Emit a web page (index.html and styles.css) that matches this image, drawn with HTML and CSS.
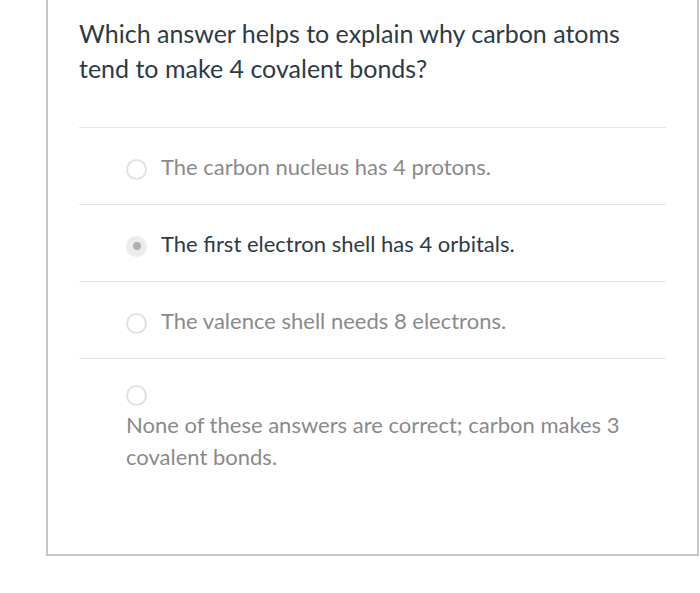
FILE: index.html
```html
<!DOCTYPE html>
<html>
<head>
<meta charset="utf-8">
<link rel="stylesheet" href="styles.css">
</head>
<body>
<div class="card">
  <div class="question">Which answer helps to explain why carbon atoms tend to make 4 covalent bonds?</div>
  <div class="answers">
    <div class="option">
      <span class="radio"></span>
      <span class="label">The carbon nucleus has 4 protons.</span>
    </div>
    <div class="option selected">
      <span class="radio"></span>
      <span class="label">The first electron shell has 4 orbitals.</span>
    </div>
    <div class="option">
      <span class="radio"></span>
      <span class="label">The valence shell needs 8 electrons.</span>
    </div>
    <div class="option stacked">
      <span class="radio"></span>
      <span class="label">None of these answers are correct; carbon makes 3 covalent bonds.</span>
    </div>
  </div>
</div>
</body>
</html>
```

FILE: styles.css
```css
html, body {
  margin: 0;
  padding: 0;
  background: #fff;
}
body {
  font-family: Lato, "Open Sans", sans-serif;
  width: 700px;
  height: 593px;
  overflow: hidden;
}
.card {
  margin: 0 1px 0 46px;
  height: 556px;
  box-sizing: border-box;
  border: 2px solid #c6c6c6;
  border-top: none;
  padding: 16px 31px 0 31px;
}
.question {
  font-size: 25px;
  line-height: 35px;
  color: #2d3b45;
  padding-right: 10px;
}
.answers {
  margin-top: 41px;
}
.option {
  border-top: 1px solid #e6e6e6;
  display: flex;
  align-items: center;
  padding: 23px 0 21px 47px;
  font-size: 22px;
  line-height: 32px;
  color: #8a8a8a;
}
.radio {
  width: 17px;
  height: 17px;
  border: 2px solid #e2e2e2;
  border-radius: 50%;
  background: #fff;
  margin-right: 14px;
  margin-top: 4px;
  flex: none;
  display: flex;
  align-items: center;
  justify-content: center;
}
.selected {
  color: #2d3b45;
}
.selected .radio {
  background: #ececec;
  border-color: #ececec;
}
.selected .radio::after {
  content: "";
  width: 8px;
  height: 8px;
  border-radius: 50%;
  background: #b0b0b0;
}
.stacked {
  display: block;
  padding-top: 26px;
  padding-right: 30px;
}
.stacked .radio {
  display: block;
  margin: 0 0 3px 0;
}
```
